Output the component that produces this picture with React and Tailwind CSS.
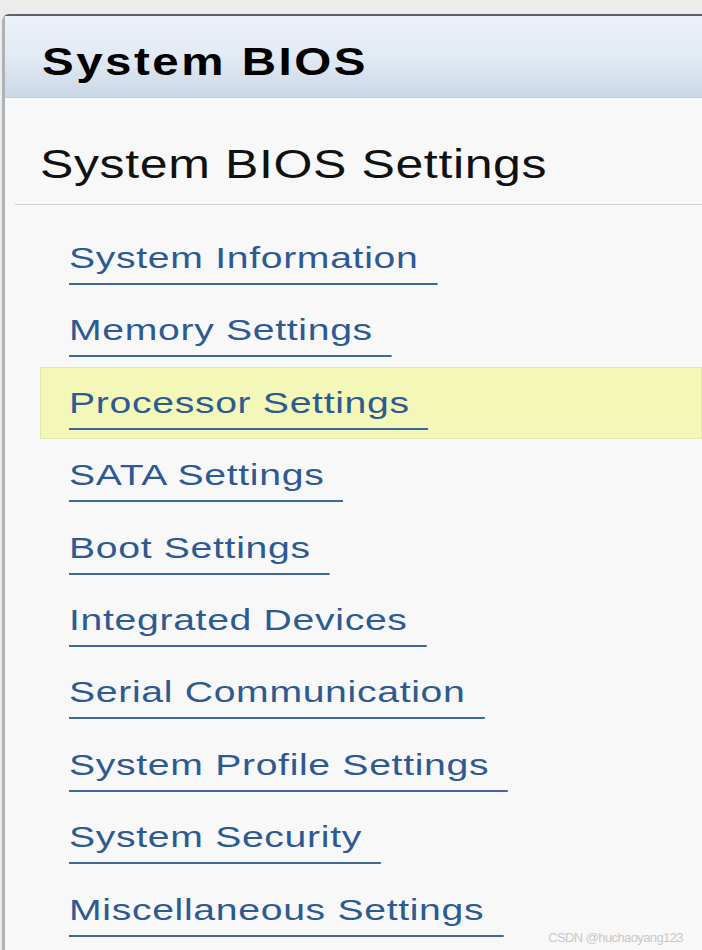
import React from 'react'

const LINKS = [
  'System Information',
  'Memory Settings',
  'Processor Settings',
  'SATA Settings',
  'Boot Settings',
  'Integrated Devices',
  'Serial Communication',
  'System Profile Settings',
  'System Security',
  'Miscellaneous Settings',
]

const FONT = { fontFamily: '"Liberation Sans", Arial, sans-serif' }

export default function App() {
  const active = 'Processor Settings'

  return (
    <div className="relative w-[702px] h-[950px] overflow-hidden bg-[#ececec] pt-[14px] pl-[2px]" style={FONT}>
      <div className="h-full rounded-tl-[7px] border-t-2 border-l-[3px] border-t-[#59616b] border-l-[#aeb2b7] bg-[#f8f8f8]">
        {/* header */}
        <div className="h-[82px] bg-gradient-to-b from-[#eaf1f9] via-[#e2eaf4] to-[#cbd8e6] border-b border-[#c3ceda] pl-[37px] pt-[24px]">
          <div className="inline-block origin-left scale-x-[1.25] text-[38px] leading-[44px] font-bold tracking-[2px] text-black">
            System BIOS
          </div>
        </div>

        {/* title */}
        <div className="pl-[35px] pt-[43px] pb-[17px]">
          <div className="inline-block origin-left scale-x-[1.25] text-[40px] leading-[46px] tracking-[0.5px] text-[#111]">
            System BIOS Settings
          </div>
        </div>
        <div className="ml-[10px] h-px bg-[#cfcfcf] mb-[17px]" />

        {/* links */}
        <div className="flex flex-col">
          {LINKS.map(name => (
            <div
              key={name}
              className={
                name === active
                  ? 'ml-[35px] h-[72.4px] pl-[28px] pt-[18px] bg-[#f3f7b8] border border-[#e3e9a6]'
                  : 'ml-[35px] h-[72.4px] pl-[29px] pt-[19px]'
              }
            >
              <a className="inline-block origin-left scale-x-[1.35] text-[29px] leading-[34px] tracking-[0.5px] text-[#2d5a93] border-b-2 border-[#3f679c] pb-[8px] pr-[14px] cursor-pointer">
                {name}
              </a>
            </div>
          ))}
        </div>
      </div>

      <div className="absolute right-[19px] bottom-[5px] text-[13px] leading-[15px] text-[#c9c9c9] tracking-[-0.6px]">
        CSDN @huchaoyang123
      </div>
    </div>
  )
}
